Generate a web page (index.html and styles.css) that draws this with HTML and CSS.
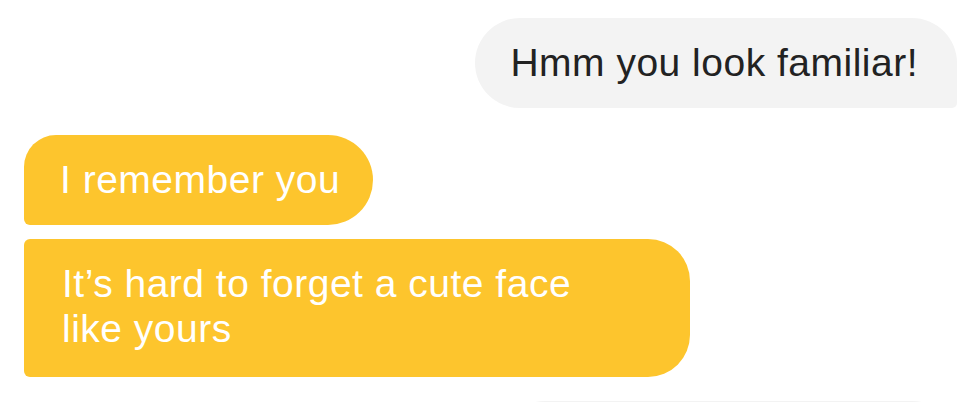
FILE: index.html
```html
<!DOCTYPE html>
<html>
<head>
<meta charset="utf-8">
<link rel="stylesheet" href="styles.css">
</head>
<body>
<div class="chat">
  <div class="msg out">Hmm you look familiar!</div>
  <div class="group">
    <div class="msg in first">I remember you</div>
    <div class="msg in last">It’s hard to forget a cute face<br>like yours</div>
  </div>
  <div class="msg out next">&nbsp;</div>
</div>
</body>
</html>
```
FILE: styles.css
```css
html, body {
  margin: 0;
  padding: 0;
  background: #ffffff;
  overflow: hidden;
}
.chat {
  box-sizing: border-box;
  height: 402px;
  overflow: hidden;
  display: flex;
  flex-direction: column;
  padding: 18px 23px 0 24px;
  font-family: "Liberation Sans", Arial, sans-serif;
  font-size: 39px;
  letter-spacing: 0.5px;
  line-height: 45px;
}
.msg {
  box-sizing: border-box;
  flex-shrink: 0;
}
.out {
  align-self: flex-end;
  background: #f3f3f3;
  color: #222222;
  height: 90px;
  padding: 22px 39px 23px 35px;
  border-radius: 45px 45px 5px 45px;
}
.group {
  display: flex;
  flex-direction: column;
  align-items: flex-start;
  gap: 14px;
  margin-top: 27px;
  flex-shrink: 0;
}
.in {
  background: #fdc52d;
  color: #ffffff;
}
.first {
  height: 90px;
  padding: 22px 33px 23px 36px;
  border-radius: 32px 45px 45px 6px;
}
.last {
  height: 138px;
  padding: 22px 38px 26px 38px;
  width: 666px;
  border-radius: 6px 42px 42px 6px;
}
.next {
  margin-top: 24px;
  width: 457px;
}
```
